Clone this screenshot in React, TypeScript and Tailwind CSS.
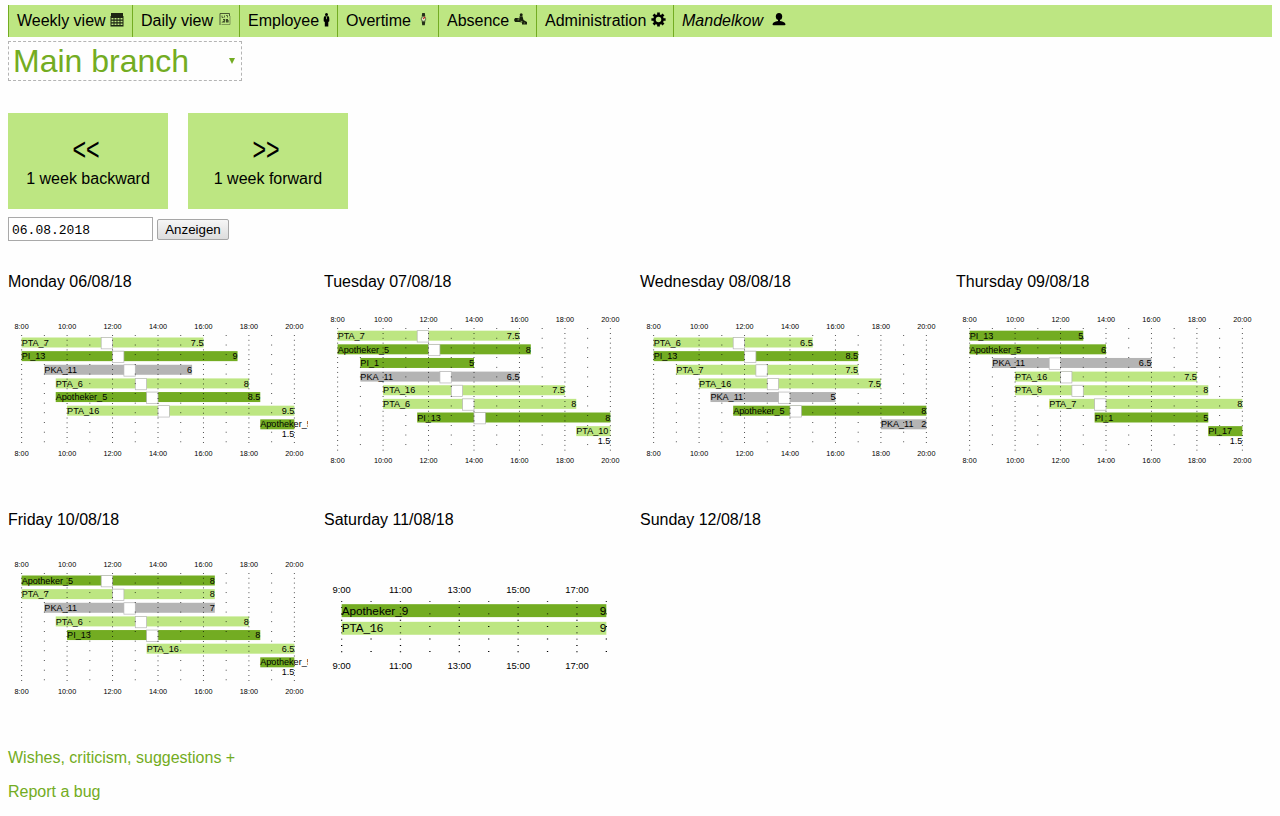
import React from "react";

type Tone = "light" | "dark" | "gray";
type Shift = { name: string; from: number; to: number; hours: string; rest?: number; below?: boolean };

const COLORS: Record<Tone, string> = { light: "#bde682", dark: "#73ac22", gray: "#b4b4b4" };

const toneOf = (name: string): Tone =>
  name.startsWith("PTA") ? "light" : name.startsWith("PKA") ? "gray" : "dark";

const s = (name: string, from: number, to: number, hours: string, rest?: number, below?: boolean): Shift => ({
  name, from, to, hours, rest, below,
});

const DAYS: { title: string; open: number; close: number; shifts: Shift[] }[] = [
  {
    title: "Monday 06/08/18", open: 8, close: 20,
    shifts: [
      s("PTA_7", 8, 16, "7.5", 11.5), s("PI_13", 8, 17.5, "9", 12), s("PKA_11", 9, 15.5, "6", 12.5),
      s("PTA_6", 9.5, 18, "8", 13), s("Apotheker_5", 9.5, 18.5, "8.5", 13.5), s("PTA_16", 10, 20, "9.5", 14),
      s("Apotheker_5", 18.5, 20, "1.5", undefined, true),
    ],
  },
  {
    title: "Tuesday 07/08/18", open: 8, close: 20,
    shifts: [
      s("PTA_7", 8, 16, "7.5", 11.5), s("Apotheker_5", 8, 16.5, "8", 12), s("PI_1", 9, 14, "5"),
      s("PKA_11", 9, 16, "6.5", 12.5), s("PTA_16", 10, 18, "7.5", 13), s("PTA_6", 10, 18.5, "8", 13.5),
      s("PI_13", 11.5, 20, "8", 14), s("PTA_10", 18.5, 20, "1.5", undefined, true),
    ],
  },
  {
    title: "Wednesday 08/08/18", open: 8, close: 20,
    shifts: [
      s("PTA_6", 8, 15, "6.5", 11.5), s("PI_13", 8, 17, "8.5", 12), s("PTA_7", 9, 17, "7.5", 12.5),
      s("PTA_16", 10, 18, "7.5", 13), s("PKA_11", 10.5, 16, "5", 13.5), s("Apotheker_5", 11.5, 20, "8", 14),
      s("PKA_11", 18, 20, "2"),
    ],
  },
  {
    title: "Thursday 09/08/18", open: 8, close: 20,
    shifts: [
      s("PI_13", 8, 13, "5"), s("Apotheker_5", 8, 14, "6"), s("PKA_11", 9, 16, "6.5", 11.5),
      s("PTA_16", 10, 18, "7.5", 12), s("PTA_6", 10, 18.5, "8", 12.5), s("PTA_7", 11.5, 20, "8", 13.5),
      s("PI_1", 13.5, 18.5, "5"), s("PI_17", 18.5, 20, "1.5", undefined, true),
    ],
  },
  {
    title: "Friday 10/08/18", open: 8, close: 20,
    shifts: [
      s("Apotheker_5", 8, 16.5, "8", 11.5), s("PTA_7", 8, 16.5, "8", 12), s("PKA_11", 9, 16.5, "7", 12.5),
      s("PTA_6", 9.5, 18, "8", 13), s("PI_13", 10, 18.5, "8", 13.5), s("PTA_16", 13.5, 20, "6.5"),
      s("Apotheker_5", 18.5, 20, "1.5", undefined, true),
    ],
  },
  {
    title: "Saturday 11/08/18", open: 9, close: 18,
    shifts: [s("Apotheker_9", 9, 18, "9"), s("PTA_16", 9, 18, "9")],
  },
  { title: "Sunday 12/08/18", open: 0, close: 0, shifts: [] },
];

const HOUR = 50;
const MARGIN = 30;
const TOP = 10;

function Roster({ open, close, shifts }: { open: number; close: number; shifts: Shift[] }) {
  const width = (close - open) * HOUR + 2 * MARGIN;
  const span = shifts.length * 30 + 70;
  const x = (h: number) => (h - open) * HOUR + MARGIN;
  const hours = Array.from({ length: close - open + 1 }, (_, i) => open + i);
  return (
    <svg className="block h-[170px] w-[300px]" viewBox={`0 0 ${width} ${span + 2 * TOP}`} fontFamily="Liberation Sans, Arial, sans-serif">
      {shifts.map((shift, i) => {
        const y = TOP + 24.5 + i * 30;
        return (
          <g key={i}>
            <rect x={x(shift.from)} y={y} width={(shift.to - shift.from) * HOUR} height="22" fill={COLORS[toneOf(shift.name)]} />
            <text x={x(shift.from)} y={y + 18} fontSize="20">{shift.name}</text>
            <text x={x(shift.to)} y={y + (shift.below ? 40 : 18)} fontSize="20" textAnchor="end">{shift.hours}</text>
            {shift.rest !== undefined && (
              <rect x={x(shift.rest)} y={y} width="25" height="25" fill="#fff" stroke="#b4b4b4" strokeWidth="1.5" />
            )}
          </g>
        );
      })}
      {hours.map((h) => {
        const major = (h - open) % 2 === 0;
        return (
          <g key={h}>
            <line x1={x(h)} x2={x(h)} y1={TOP + 19} y2={TOP + span - 19} stroke="#000" strokeWidth="2.2" strokeDasharray={major ? "1.5 9.2" : "1.5 19.8"} />
            {major && (
              <>
                <text x={x(h)} y={TOP + 5.5} fontSize="16" textAnchor="middle">{h}:00</text>
                <text x={x(h)} y={TOP + span + 5} fontSize="16" textAnchor="middle">{h}:00</text>
              </>
            )}
          </g>
        );
      })}
    </svg>
  );
}

const CalendarGrid = () => (
  <svg className="h-[14px] w-[14px]" viewBox="0 0 14 14">
    <path d="M1 0h12v3H1zM.5 3h13v10.500h-13z" fill="#1c2412" />
    <path d="M1.500 5h2v1.500h-2zm3 0h2v1.500h-2zm3 0h2v1.500h-2zm3 0h2v1.500h-2zm-9 2.700h2v1.500h-2zm3 0h2v1.500h-2zm3 0h2v1.500h-2zm3 0h2v1.500h-2zm-9 2.700h2v1.500h-2zm3 0h2v1.500h-2zm3 0h2v1.500h-2zm3 0h2v1.500h-2z" fill="#bde682" />
  </svg>
);
const DayLeaf = () => (
  <svg className="h-[13px] w-3" viewBox="0 0 12 13" fill="none" stroke="#3c4a28">
    <path d="M1 12V.5h9.500V3" strokeWidth=".9" />
    <path d="M2.500 11.500h8.500V3" strokeWidth=".5" />
    <path d="M3 2.500v2h1.500M5.500 2.500v2M7 2.500h1.500v2" strokeWidth=".8" />
    <path d="M4 6.500h1.500v1.200L4 9h2M9 6.500H7.500v2.300H9V7.500H7.500" strokeWidth="1.200" />
  </svg>
);
const Person = () => (
  <svg className="h-[14px] w-[7px]" viewBox="0 0 7 14">
    <circle cx="3.500" cy="1.600" r="1.500" />
    <path d="M1.500 3.300h4Q6.500 4 6.300 8.300L5.300 9v4.500H1.800V9L.7 8.300Q.5 4 1.500 3.300z" />
    <path d="M3.500 3.500v2.700" stroke="#bde682" strokeWidth=".7" />
  </svg>
);
const Watch = () => (
  <svg className="h-[13px] w-[7px]" viewBox="0 0 7 13">
    <path d="M2.200 0h2.600l.5 3.500H1.700zM1.700 8.300h3.600L4.800 12.300H2.200z" fill="#26301a" />
    <circle cx="3.500" cy="6" r="2.300" fill="#dbeabf" stroke="#4b5738" strokeWidth=".8" />
    <path d="M3.200 5.800L5 4" stroke="#c22" strokeWidth="1.200" />
  </svg>
);
const Lounger = () => (
  <svg className="h-3 w-[14px]" viewBox="0 0 14 12" fill="#17200d">
    <circle cx="7.200" cy="1.700" r="1.500" />
    <path d="M5.500 3.200h3L9.500 7 13 9v2.500H8V9.500L5 9H1L0 7l1-2h2l2.500.500z" />
    <path d="M3.500 6.800h1.800M6.500 8.200l2 .5M9.800 10h1" stroke="#bde682" strokeWidth=".6" />
  </svg>
);
const Gear = () => (
  <svg className="h-[15px] w-[15px]" viewBox="0 0 15 15" fill="none" stroke="#000">
    <circle cx="7.500" cy="7.500" r="4" strokeWidth="2.500" />
    <path d="M7.500.4V3m0 9v2.600M.4 7.500H3m9 0h2.600M2.500 2.500l1.800 1.800m6.400 6.400l1.800 1.800M12.500 2.500l-1.800 1.800m-6.400 6.400l-1.800 1.800" strokeWidth="2.700" />
  </svg>
);
const Account = () => (
  <svg className="h-[13px] w-[14px]" viewBox="0 0 14 13">
    <ellipse cx="7" cy="3.500" rx="3.200" ry="3.500" />
    <path d="M6 5h2v3q5 .7 5.500 3.200 0 1-1 1H1.500q-1 0-1-1Q1 8.700 6 8z" />
  </svg>
);

const NAV: { label: string; width: string; gap: string; lift: string; icon: React.ReactNode; italic?: boolean }[] = [
  { label: "Weekly view", width: "w-[124px]", gap: "gap-1", lift: "pt-px", icon: <CalendarGrid /> },
  { label: "Daily view", width: "w-[107px]", gap: "gap-1.5", lift: "pt-px", icon: <DayLeaf /> },
  { label: "Employee", width: "w-[98px]", gap: "gap-1", lift: "pt-px", icon: <Person /> },
  { label: "Overtime", width: "w-[101px]", gap: "gap-[9px]", lift: "pt-px", icon: <Watch /> },
  { label: "Absence", width: "w-[98px]", gap: "gap-[5px]", lift: "pt-px", icon: <Lounger /> },
  { label: "Administration", width: "w-[137px]", gap: "gap-[5px]", lift: "pt-0", icon: <Gear /> },
  { label: "Mandelkow", width: "w-[140px]", gap: "gap-[9px]", lift: "pt-px", icon: <Account />, italic: true },
];

function WeekButton({ sign, label }: { sign: string; label: string }) {
  return (
    <button className="flex h-24 w-40 flex-col items-center bg-[#bde682] pt-[21px]">
      <span className="block h-8 origin-center -translate-x-[2px] scale-x-[0.97] scale-y-[1.3] font-['Liberation_Sans'] text-[24px] leading-8">{sign}</span>
      <span className="mt-1 leading-[18px]">{label}</span>
    </button>
  );
}

export default function App() {
  return (
    <div className="min-h-[816px] bg-[#fefefe] px-2 pt-[5px] font-['Liberation_Sans',Arial,sans-serif] text-base text-black">
      <nav className="flex h-8 bg-[#bde682]">
        {NAV.map((item) => (
          <a key={item.label} className={`flex h-8 shrink-0 border-l border-[#73ac22] pl-2 pt-[7px] leading-[18px] whitespace-nowrap ${item.width} ${item.gap}`}>
            <span className={item.italic ? "italic" : ""}>{item.label}</span>
            <span className={item.lift}>{item.icon}</span>
          </a>
        ))}
      </nav>

      <div className="mt-1 flex h-10 w-[234px] items-center justify-between border border-dashed border-[#b4b4b4] pl-1 pr-1.5 text-[#73ac22]">
        <span className="text-[32px] leading-9">Main branch</span>
        <svg className="h-1.5 w-1.5" viewBox="0 0 6 6"><path d="M0 0h6L3 6z" fill="#73ac22" /></svg>
      </div>

      <div className="mt-8 flex gap-5">
        <WeekButton sign="<<" label="1 week backward" />
        <WeekButton sign=">>" label="1 week forward" />
      </div>

      <div className="mt-2 flex h-6 items-center gap-1">
        <div className="flex h-6 w-[145px] items-center border border-[#a9a9a9] bg-white pl-[3px] pt-1 font-['Liberation_Mono',monospace] text-[13px]">06.08.2018</div>
        <button className="mt-px h-[21px] w-[72px] rounded-[2px] border border-[#a6a6a6] bg-linear-to-b from-[#f6f6f6] to-[#dddddd] text-[13.333px] leading-[19px]">Anzeigen</button>
      </div>

      <main className="mt-8 grid grid-cols-[repeat(4,316px)]">
        {DAYS.map((day) => (
          <section key={day.title} className="h-[238px]">
            <h2 className="mb-3.5 h-[18px] leading-[18px]">{day.title}</h2>
            {day.shifts.length > 0 && <Roster open={day.open} close={day.close} shifts={day.shifts} />}
          </section>
        ))}
      </main>

      <footer className="flex flex-col gap-4 text-[#73ac22]">
        <a className="leading-[18px]">Wishes, criticism, suggestions +</a>
        <a className="leading-[18px]">Report a bug</a>
      </footer>
    </div>
  );
}
